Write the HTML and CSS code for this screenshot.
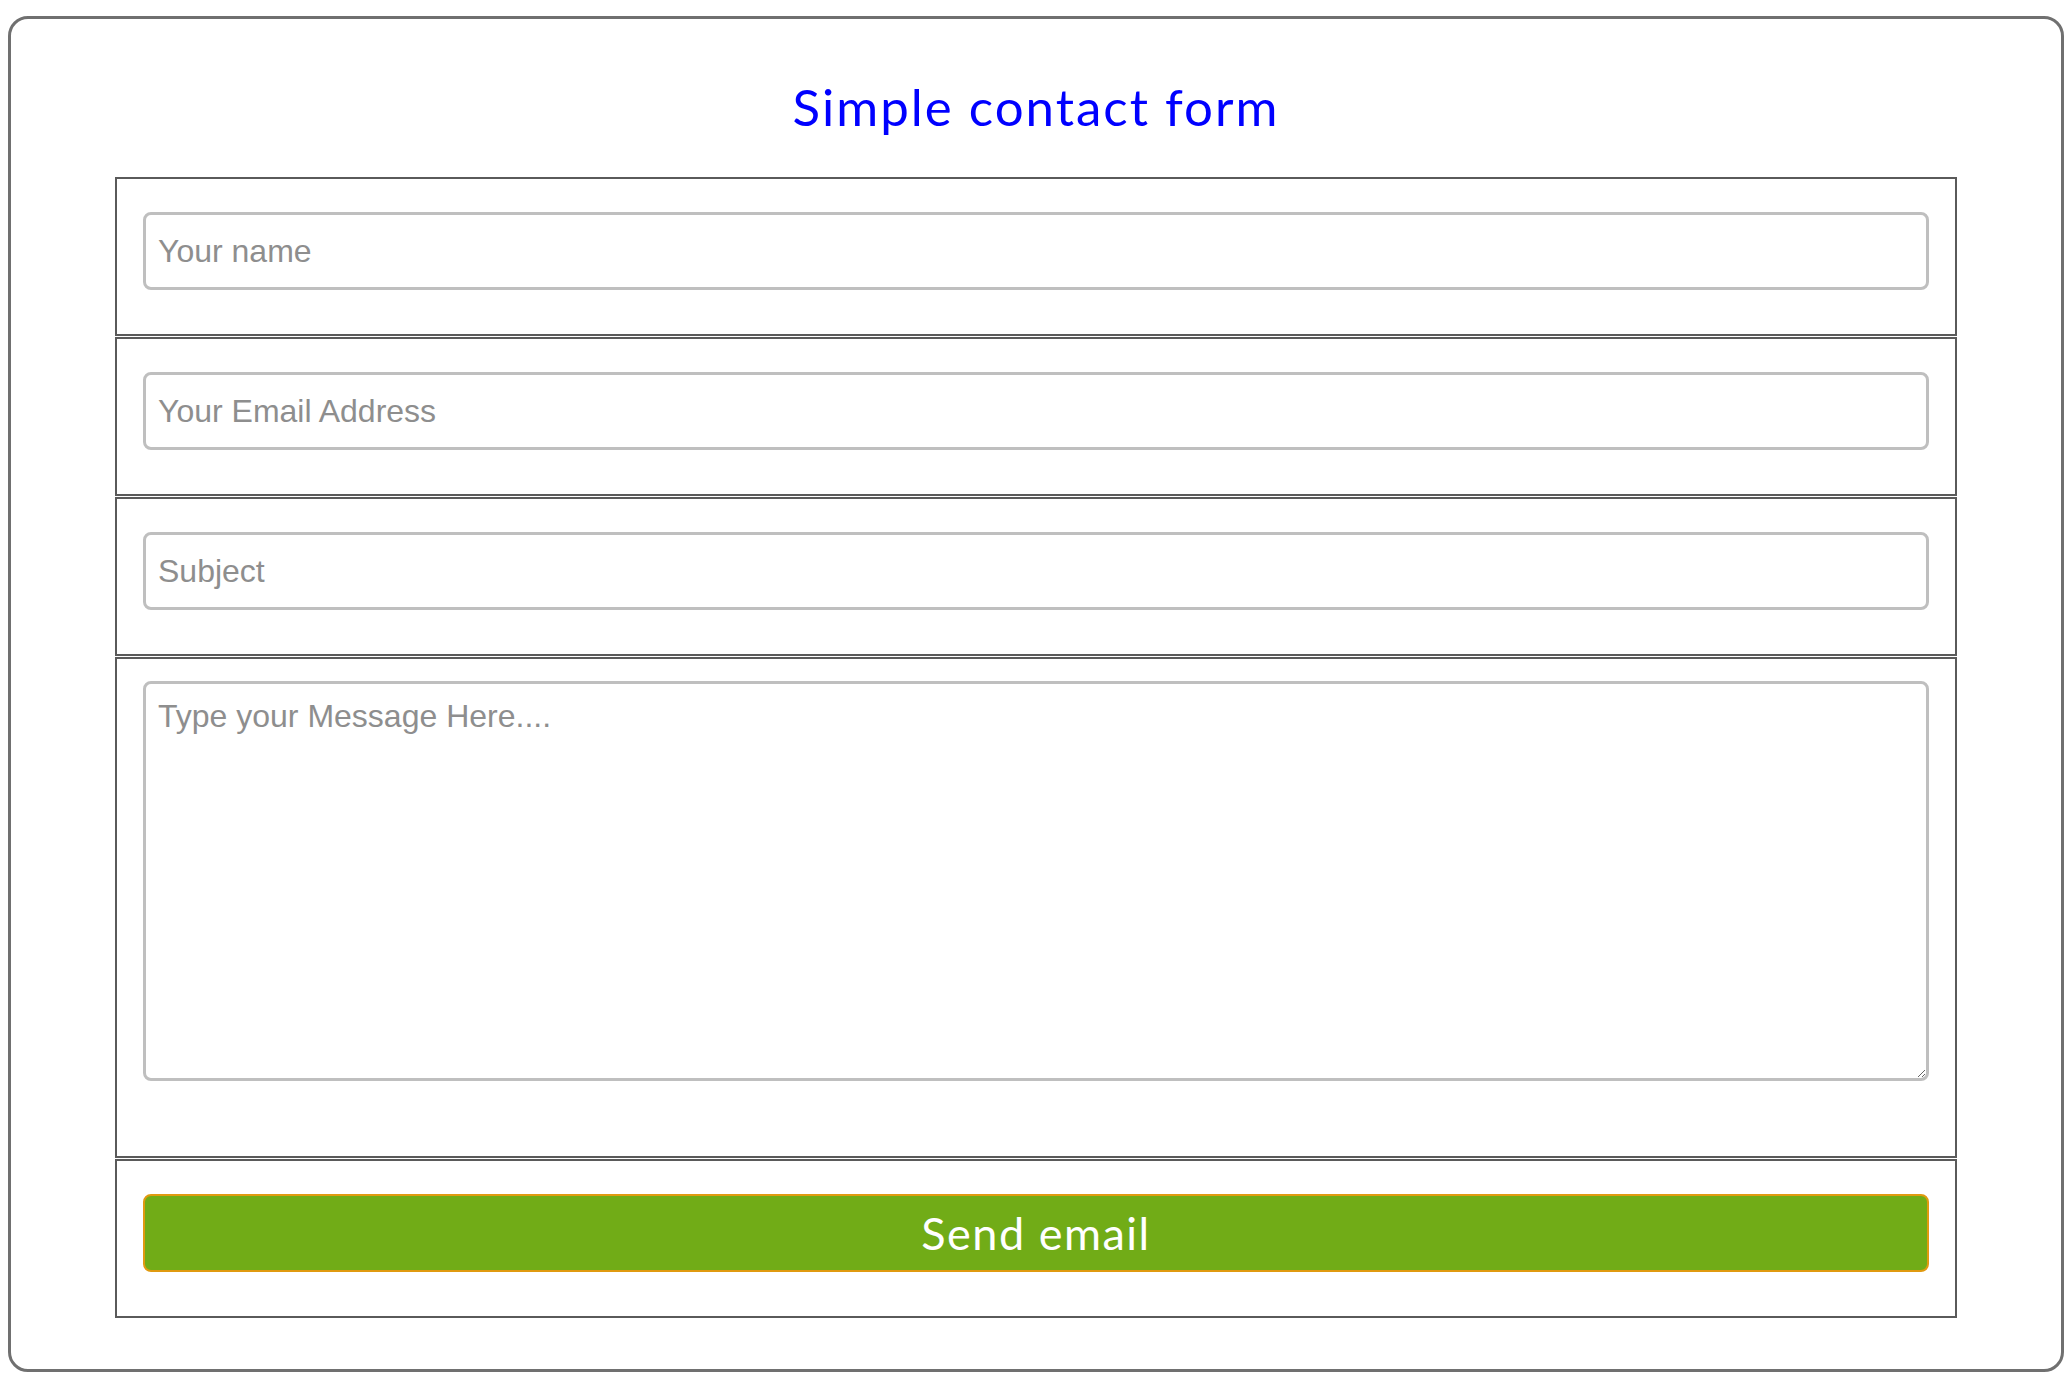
FILE: index.html
```html
<!DOCTYPE html>
<html lang="en">
<head>
<meta charset="utf-8">
<title>Simple contact form</title>
<link rel="stylesheet" href="styles.css">
</head>
<body>
<div class="card">
  <h1 class="title">Simple contact form</h1>
  <form class="form">
    <fieldset class="row">
      <input class="field" type="text" placeholder="Your name">
    </fieldset>
    <fieldset class="row">
      <input class="field" type="email" placeholder="Your Email Address">
    </fieldset>
    <fieldset class="row">
      <input class="field" type="text" placeholder="Subject">
    </fieldset>
    <fieldset class="row row-message">
      <textarea class="message" placeholder="Type your Message Here...."></textarea>
    </fieldset>
    <fieldset class="row">
      <button class="send" type="button">Send email</button>
    </fieldset>
  </form>
</div>
</body>
</html>
```
FILE: styles.css
```css
html, body {
  background: #ffffff;
}
body {
  margin: 8px;
  font-family: "Liberation Sans", Arial, sans-serif;
}
.card {
  margin-top: 8px;
  height: 1356px;
  box-sizing: border-box;
  border: 3px solid #707070;
  border-radius: 20px;
  padding-top: 58px;
}
.title {
  margin: 0 0 40px;
  text-align: center;
  font-family: Lato, "Open Sans", sans-serif;
  font-weight: 400;
  font-size: 51px;
  letter-spacing: 2px;
  line-height: 60px;
  color: #0000ff;
}
.form {
  margin: 0 104px;
}
.row {
  margin: 0 0 1px;
  padding: 33px 26px 44px;
  border: 2px solid #5a5a5a;
  min-width: 0;
}
.row-message {
  padding-top: 22px;
  padding-bottom: 75px;
}
.field, .message {
  display: block;
  width: 100%;
  box-sizing: border-box;
  margin: 0;
  border: 3px solid #bfbfbf;
  border-radius: 8px;
  font-family: "Liberation Sans", Arial, sans-serif;
  font-size: 32px;
  color: #333;
  background: #fff;
  outline: none;
}
.field {
  height: 78px;
  padding: 0 12px;
}
.message {
  height: 400px;
  padding: 14px 12px;
  line-height: 36px;
  resize: both;
}
.field::placeholder, .message::placeholder {
  color: #8e8e8e;
  opacity: 1;
}
.send {
  display: block;
  width: 100%;
  height: 78px;
  margin: 0;
  border: 2px solid #e09a10;
  border-radius: 8px;
  background: #71ac17;
  color: #ffffff;
  font-family: Lato, "Open Sans", sans-serif;
  font-size: 45px;
  letter-spacing: 1.5px;
  font-weight: 400;
  cursor: pointer;
}
```
